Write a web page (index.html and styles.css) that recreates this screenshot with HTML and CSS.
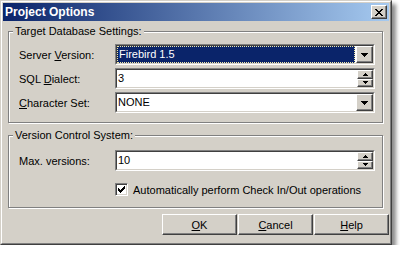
FILE: index.html
```html
<!DOCTYPE html>
<html lang="en">
<head>
    <meta charset="UTF-8">
    <title>Project Options</title>
    <link rel="stylesheet" href="styles.css">
</head>
<body>
    <div class="window">
        <div class="frame">
            <div class="titlebar">
                <span class="title">Project Options</span>
                <div class="close">
                    <svg width="8" height="7" viewBox="0 0 8 7" shape-rendering="crispEdges">
                        <path d="M0 0h2v1h-2z M6 0h2v1h-2z M1 1h2v1h-2z M5 1h2v1h-2z M2 2h4v1h-4z M3 3h2v1h-2z M2 4h4v1h-4z M1 5h2v1h-2z M5 5h2v1h-2z M0 6h2v1h-2z M6 6h2v1h-2z"/>
                    </svg>
                </div>
            </div>

            <div class="content">
                <div class="group group-db">
                    <span class="group-title">Target Database Settings:</span>

                    <label>Server <u>V</u>ersion:</label>
                    <div class="sunken">
                        <div class="inner">
                            <div class="value selected">Firebird 1.5</div>
                            <div class="drop">
                                <svg width="7" height="4" viewBox="0 0 7 4" shape-rendering="crispEdges"><path d="M0 0h7v1h-1v1h-1v1h-1v1h-1v-1h-1v-1h-1v-1h-1z"/></svg>
                            </div>
                        </div>
                    </div>

                    <label>SQL <u>D</u>ialect:</label>
                    <div class="sunken">
                        <div class="inner">
                            <div class="value">3</div>
                            <div class="spin">
                                <div class="spin-btn"><svg width="5" height="3" viewBox="0 0 5 3" shape-rendering="crispEdges"><path d="M2 0h1v1h1v1h1v1h-5v-1h1v-1h1z"/></svg></div>
                                <div class="spin-btn"><svg width="5" height="3" viewBox="0 0 5 3" shape-rendering="crispEdges"><path d="M0 0h5v1h-1v1h-1v1h-1v-1h-1v-1h-1z"/></svg></div>
                            </div>
                        </div>
                    </div>

                    <label><u>C</u>haracter Set:</label>
                    <div class="sunken">
                        <div class="inner">
                            <div class="value">NONE</div>
                            <div class="drop">
                                <svg width="7" height="4" viewBox="0 0 7 4" shape-rendering="crispEdges"><path d="M0 0h7v1h-1v1h-1v1h-1v1h-1v-1h-1v-1h-1v-1h-1z"/></svg>
                            </div>
                        </div>
                    </div>
                </div>

                <div class="group group-vcs">
                    <span class="group-title">Version Control System:</span>

                    <label>Max. versions:</label>
                    <div class="sunken">
                        <div class="inner">
                            <div class="value">10</div>
                            <div class="spin">
                                <div class="spin-btn"><svg width="5" height="3" viewBox="0 0 5 3" shape-rendering="crispEdges"><path d="M2 0h1v1h1v1h1v1h-5v-1h1v-1h1z"/></svg></div>
                                <div class="spin-btn"><svg width="5" height="3" viewBox="0 0 5 3" shape-rendering="crispEdges"><path d="M0 0h5v1h-1v1h-1v1h-1v-1h-1v-1h-1z"/></svg></div>
                            </div>
                        </div>
                    </div>

                    <div class="check-row">
                        <div class="checkbox">
                            <svg width="7" height="7" viewBox="0 0 7 7" shape-rendering="crispEdges">
                                <path d="M6 0h1v1h-1z M5 1h2v1h-2z M0 2h1v1h-1z M4 2h3v1h-3z M0 3h2v1h-2z M3 3h3v1h-3z M0 4h5v1h-5z M1 5h3v1h-3z M2 6h1v1h-1z"/>
                            </svg>
                        </div>
                        <span>Automatically perform Check In/Out operations</span>
                    </div>
                </div>

                <div class="buttons">
                    <div class="button"><u>O</u>K</div>
                    <div class="button"><u>C</u>ancel</div>
                    <div class="button"><u>H</u>elp</div>
                </div>
            </div>
        </div>
    </div>
</body>
</html>
```

FILE: styles.css
```css
* {
    box-sizing: border-box;
}
body {
    margin: 0;
    background-color: #fff;
    font-family: "Liberation Sans", Arial, sans-serif;
    font-size: 11px;
    color: #000;
}
.window {
    width: 392px;
    height: 245px;
    background-color: #d4d0c8;
    border: 1px solid;
    border-color: #d4d0c8 #404040 #404040 #d4d0c8;
    box-shadow: 4px 4px 4px rgba(0, 0, 0, 0.45);
}
.frame {
    height: 100%;
    border: 1px solid;
    border-color: #fff #808080 #808080 #fff;
    padding: 1px;
}
.titlebar {
    height: 18px;
    padding: 0 2px;
    display: flex;
    align-items: center;
    justify-content: space-between;
    background: linear-gradient(to right, #0a246a, #a6caf0);
}
.title {
    color: #fff;
    font-weight: bold;
    font-size: 12px;
}
.close {
    width: 16px;
    height: 14px;
    display: flex;
    align-items: center;
    justify-content: center;
    background-color: #d4d0c8;
    border: 1px solid;
    border-color: #fff #404040 #404040 #fff;
    box-shadow: inset -1px -1px 0 #808080;
}
.content {
    padding: 10px 6px 0 5px;
}
.group {
    position: relative;
    border: 1px solid #808080;
    box-shadow: 1px 1px 0 #fff, inset 1px 1px 0 #fff;
    display: grid;
    grid-template-columns: 96px 1fr;
    row-gap: 3px;
    align-items: center;
}
.group-db {
    padding: 12px 7px 9px 10px;
}
.group-vcs {
    margin-top: 12px;
    padding: 14px 7px 11px 10px;
}
.group-title {
    position: absolute;
    top: -7px;
    left: 4px;
    padding: 0 2px;
    line-height: 13px;
    background-color: #d4d0c8;
}
.sunken {
    height: 21px;
    border: 1px solid;
    border-color: #808080 #fff #fff #808080;
}
.inner {
    height: 100%;
    display: flex;
    background-color: #fff;
    border: 1px solid;
    border-color: #404040 #d4d0c8 #d4d0c8 #404040;
}
.value {
    flex: 1;
    padding-left: 1px;
    line-height: 17px;
}
.value.selected {
    background-color: #0a246a;
    color: #fff;
    border: 1px dotted #f0e8a8;
    line-height: 15px;
    margin-right: 1px;
}
.drop {
    width: 17px;
    height: 17px;
    display: flex;
    align-items: center;
    justify-content: center;
    background-color: #d4d0c8;
    border: 1px solid;
    border-color: #fff #404040 #404040 #fff;
    box-shadow: inset -1px -1px 0 #808080;
}
.spin {
    width: 16px;
    display: flex;
    flex-direction: column;
}
.spin-btn {
    flex: 1;
    display: flex;
    align-items: center;
    justify-content: center;
    background-color: #d4d0c8;
    border: 1px solid;
    border-color: #fff #404040 #404040 #fff;
    box-shadow: inset -1px -1px 0 #808080;
}
.check-row {
    grid-column: 2;
    margin-top: 9px;
    display: flex;
    align-items: center;
    gap: 5px;
}
.checkbox {
    width: 13px;
    height: 13px;
    display: flex;
    align-items: center;
    justify-content: center;
    background-color: #fff;
    border: 1px solid;
    border-color: #808080 #fff #fff #808080;
    box-shadow: inset 1px 1px 0 #404040, inset -1px -1px 0 #d4d0c8;
}
.buttons {
    margin: 6px -6px 0 0;
    display: flex;
    justify-content: flex-end;
    gap: 1px;
}
.button {
    width: 75px;
    height: 21px;
    display: flex;
    align-items: center;
    justify-content: center;
    border: 1px solid;
    border-color: #fff #404040 #404040 #fff;
    box-shadow: inset -1px -1px 0 #808080;
}
```
